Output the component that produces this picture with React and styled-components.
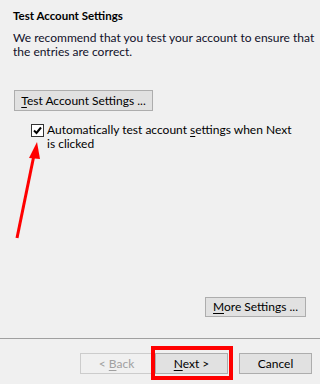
import React from "react";
import styled, { createGlobalStyle } from "styled-components";

const Global = createGlobalStyle`
  html, body {
    margin: 0;
    padding: 0;
    background: #f0f0f0;
  }
  body {
    font-family: Lato, "Noto Sans", "DejaVu Sans", sans-serif;
    font-size: 12px;
    color: #000;
  }
`;

const Window = styled.div`
  position: relative;
  width: 320px;
  height: 384px;
  display: flex;
  flex-direction: column;
  background: #f0f0f0;
  overflow: hidden;
`;

const Main = styled.div`
  flex: 1;
  display: flex;
  flex-direction: column;
  padding: 8px 14px 21px 13px;
`;

const Heading = styled.h1`
  margin: 0;
  font-size: 11.5px;
  line-height: 15px;
  font-weight: 700;
`;

const Para = styled.p`
  margin: 8px 0 0;
  line-height: 14px;
  color: #10102a;
  white-space: nowrap;
`;

const Button = styled.button`
  font-family: inherit;
  font-size: 12px;
  height: ${(p) => p.$h || 21}px;
  width: ${(p) => (p.$w ? `${p.$w}px` : "auto")};
  padding: 0 ${(p) => (p.$w ? 0 : 8)}px;
  background: ${(p) => (p.disabled ? "#f0f0f0" : "#e1e1e1")};
  border: 1px solid ${(p) => (p.disabled ? "#cccccc" : "#adadad")};
  color: ${(p) => (p.disabled ? "#a0a0a0" : "#000")};
  border-radius: 0;
  line-height: 19px;
  cursor: default;
  white-space: nowrap;
`;

const Key = styled.span`
  text-decoration: underline;
  text-underline-offset: 2px;
`;

const TestButton = styled(Button)`
  align-self: flex-start;
  width: 139px;
  padding: 0;
  margin: 31px 0 0 1px;
`;

const CheckRow = styled.label`
  display: flex;
  align-items: flex-start;
  gap: 3px;
  margin: 12px 0 0 18px;
  line-height: 14px;
  white-space: nowrap;
`;

const Box = styled.span`
  flex: none;
  width: 11px;
  height: 11px;
  margin-top: 1px;
  border: 1px solid #333;
  background: #fff;
  display: flex;
  align-items: center;
  justify-content: center;
`;

const Spacer = styled.div`
  flex: 1;
`;

const MoreButton = styled(Button)`
  align-self: flex-end;
  width: 101px;
  padding: 0;
  height: 20px;
  line-height: 18px;
`;

const Separator = styled.div`
  height: 1px;
  background: #a0a0a0;
  flex: none;
`;

const Footer = styled.div`
  display: flex;
  justify-content: flex-end;
  align-items: center;
  padding: 14px 8px 10px 0;
`;

const Highlight = styled.span`
  position: relative;
  display: inline-flex;
  margin: 0 11px 0 2px;
  &::after {
    content: "";
    position: absolute;
    top: -7px;
    left: -4px;
    right: -5px;
    bottom: -6px;
    border: 4px solid #ff0000;
    pointer-events: none;
  }
`;

const Arrow = styled.svg`
  position: absolute;
  left: 0;
  top: 0;
  pointer-events: none;
`;

function Check() {
  return (
    <svg width="9" height="9" viewBox="0 0 9 9">
      <path d="M1 4.5 L3.5 7 L8 1.5" fill="none" stroke="#000" strokeWidth="2" />
    </svg>
  );
}

export default function App() {
  return (
    <>
      <Global />
      <Window>
        <Main>
          <Heading>Test Account Settings</Heading>
          <Para>
            We recommend that you test your account to ensure that
            <br />
            the entries are correct.
          </Para>
          <TestButton>
            <Key>T</Key>est Account Settings ...
          </TestButton>
          <CheckRow>
            <Box>
              <Check />
            </Box>
            <span>
              Automatically test account <Key>s</Key>ettings when Next
              <br />
              is clicked
            </span>
          </CheckRow>
          <Spacer />
          <MoreButton>
            <Key>M</Key>ore Settings ...
          </MoreButton>
        </Main>
        <Separator />
        <Footer>
          <Button $w={73} disabled>
            &lt; <Key>B</Key>ack
          </Button>
          <Highlight>
            <Button $w={73}>
              <Key>N</Key>ext &gt;
            </Button>
          </Highlight>
          <Button $w={73}>Cancel</Button>
        </Footer>
        <Arrow width="320" height="384" viewBox="0 0 320 384">
          <line x1="17" y1="238" x2="34" y2="155" stroke="#ff0000" strokeWidth="3" />
          <polygon points="37,142 29,158 40,159" fill="#ff0000" />
        </Arrow>
      </Window>
    </>
  );
}
